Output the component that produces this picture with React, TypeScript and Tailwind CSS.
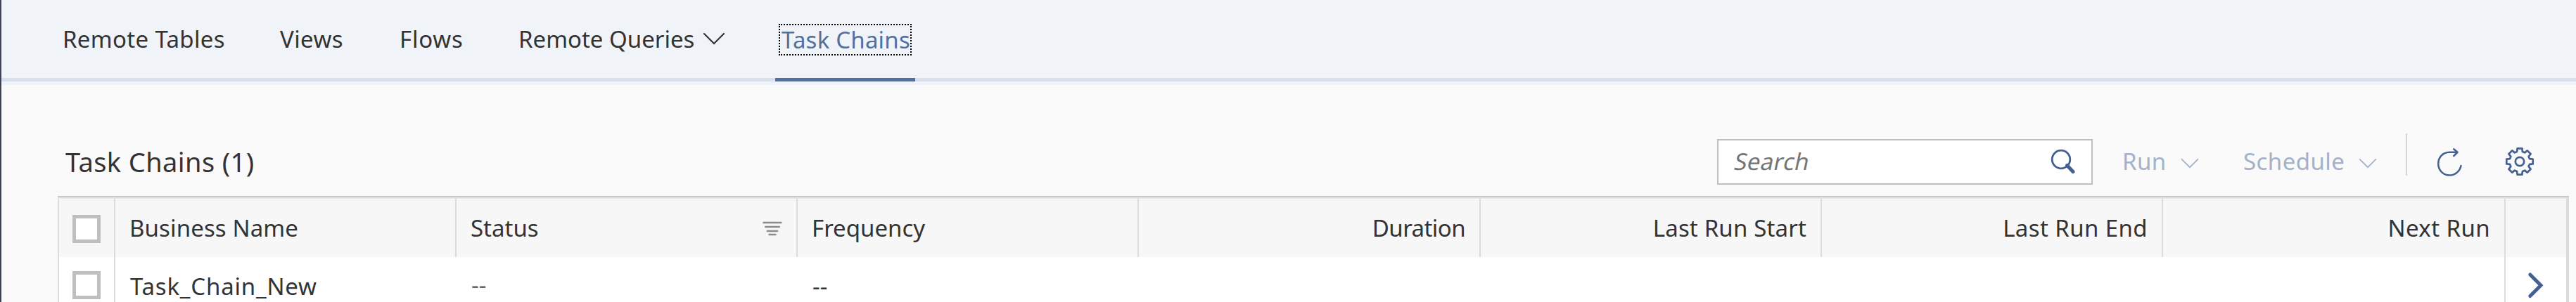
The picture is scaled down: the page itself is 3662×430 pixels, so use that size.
import React from "react";

const GEAR = (() => {
  const pts: string[] = [];
  for (let k = 0; k < 8; k++) {
    const a = (k * Math.PI) / 4;
    for (const [x, y] of [[-3.9, -14], [-3.4, -18.7], [3.4, -18.7], [3.9, -14]]) {
      const px = 22 + x * Math.cos(a) - y * Math.sin(a);
      const py = 22 + x * Math.sin(a) + y * Math.cos(a);
      pts.push(`${px.toFixed(2)} ${py.toFixed(2)}`);
    }
  }
  return `M${pts.join("L")}Z`;
})();

function Chevron({ className, strokeWidth }: { className: string; strokeWidth: number }) {
  return (
    <svg viewBox="0 0 32 18" fill="none" stroke="currentColor" strokeWidth={strokeWidth} strokeLinecap="round" className={className}>
      <path d="M2 2L16 16L30 2" />
    </svg>
  );
}

function Checkbox() {
  return <span className="size-10 shrink-0 border-[5px] border-[#bfbfbf] bg-white" />;
}

const cell = "flex items-center border-l-2 border-[#dcdcdc] px-5";

export default function App() {
  return (
    <div className="flex h-[430px] w-[3662px] flex-col overflow-hidden border-l-2 border-[#3b4354] bg-[#fafafa] font-['Noto_Sans','Liberation_Sans',sans-serif] text-[33px] leading-[44px] whitespace-nowrap text-[#333]">
      <nav className="flex h-[121px] shrink-0 border-b-[5px] border-[#f0f3fa] bg-[#f0f4f9]">
        <div className="flex h-[116px] w-full border-b-[5px] border-[#d8e0ee] pl-[87px]">
          <div className="w-[309px] pt-[34px] tracking-[0.34px]">Remote Tables</div>
          <div className="w-[170px] pt-[34px] tracking-[0.4px]">Views</div>
          <div className="w-[169px] pt-[34px] tracking-[0.8px]">Flows</div>
          <div className="flex w-[365px] pt-[34px]">
            <span className="w-[262px]">Remote Queries</span>
            <Chevron className="mt-[12px] h-[18px] w-8" strokeWidth={2.2} />
          </div>
          <div className="h-[116px] w-[199px] border-b-[5px] border-[#5170a0] pt-[34px] pl-[5px] text-[#5170a0]">
            <div className="h-[45px] w-[189px] border-2 border-dotted border-black pl-[2px] leading-[41px] tracking-[0.2px]">Task Chains</div>
          </div>
        </div>
      </nav>

      <main className="flex flex-1 flex-col pt-[69px] pl-20">
        <div className="flex h-[89px] shrink-0">
          <h1 className="w-[2348px] pt-[18px] pl-[11px] text-[38px] tracking-[0.4px]">Task Chains (1)</h1>
          <div className="mt-2 ml-[11px] flex h-[65px] w-[534px] justify-between border-2 border-[#bfbfbf] bg-white pl-[23px]">
            <span className="-skew-x-12 pt-[8px] tracking-[0.35px] text-[#757575]">Search</span>
            <svg viewBox="0 0 40 40" fill="none" stroke="#446090" className="mt-[9px] mr-[23px] size-10" strokeLinecap="round">
              <circle cx="20" cy="18" r="12.8" strokeWidth="2.8" />
              <path d="M28.5 26.5L37 35.5" strokeWidth="5" />
            </svg>
          </div>
          <div className="flex pt-[18px] pl-[42px] text-[#a3b1c9]">
            <span className="w-[83px] tracking-[0.4px]">Run</span>
            <Chevron className="mt-[17px] h-[15px] w-[26px]" strokeWidth={2.2} />
            <span className="ml-[63px] w-[164px] tracking-[0.45px]">Schedule</span>
            <Chevron className="mt-[17px] h-[15px] w-[26px]" strokeWidth={2.2} />
          </div>
          <div className="ml-[41px] h-[60px] w-[2px] bg-[#d3d5d8]" />
          <svg viewBox="0 0 44 44" fill="none" stroke="#446090" strokeWidth="2.5" strokeLinecap="round" strokeLinejoin="round" className="mt-[18px] ml-[38px] size-11">
            <path d="M33 8.8H22C12 9 6.2 16.5 6.2 25.3C6.2 34.5 13.5 41.6 22 41.6C30.5 41.6 37 35.5 38.5 28" />
            <path d="M28.3 4.2L33.5 8.8L28.3 14" />
          </svg>
          <svg viewBox="0 0 44 44" fill="none" stroke="#446090" strokeWidth="2.7" strokeLinejoin="round" className="mt-[18px] ml-14 size-11">
            <path d={GEAR} />
            <circle cx="22" cy="22" r="6.2" />
          </svg>
        </div>

        <div className="flex w-[3570px] flex-1 flex-col border-t-2 border-[#c9c9c9] bg-white">
          <div className="flex flex-1 flex-col border-t-2 border-r-4 border-t-[#e6e6e6] border-r-[#dcdcdc]">
            <div className="grid h-[83px] shrink-0 grid-cols-[80px_485px_485px_485px_486px_485px_485px_487px_88px] bg-[#f7f7f7]">
              <div className="flex items-center border-l-2 border-[#dcdcdc] pt-[3px] pl-[19px]"><Checkbox /></div>
              <div className={`${cell} tracking-[0.12px]`}>Business Name</div>
              <div className={`${cell} justify-between`}>
                <span>Status</span>
                <svg viewBox="0 0 28 22" fill="none" stroke="#8c8c8c" strokeWidth="2.3" className="h-[22px] w-7">
                  <path d="M0.5 3H27.5M3.2 9H24.8M5.8 15H22.2M8.5 20H19.5" />
                </svg>
              </div>
              <div className={cell}>Frequency</div>
              <div className={`${cell} justify-end tracking-[-0.57px]`}>Duration</div>
              <div className={`${cell} justify-end tracking-[0.15px]`}>Last Run Start</div>
              <div className={`${cell} justify-end tracking-[0.4px]`}>Last Run End</div>
              <div className={`${cell} justify-end tracking-[0.4px]`}>Next Run</div>
              <div className="border-l-2 border-[#dcdcdc]" />
            </div>
            <div className="grid flex-1 grid-cols-[80px_485px_485px_485px_486px_485px_485px_487px_88px] overflow-hidden bg-white">
              <div className="flex items-start border-l-2 border-[#dcdcdc] pt-5 pl-[19px]"><Checkbox /></div>
              <div className="border-l-2 border-[#dcdcdc] pt-[20px] pl-[21px] tracking-[0.8px]">Task_Chain_New</div>
              <div className="pt-[18px] pl-[23px] text-[#5b6770]">--</div>
              <div className="pt-[20px] pl-[23px]">--</div>
              <div />
              <div />
              <div />
              <div />
              <div className="border-l-2 border-[#dcdcdc] pt-[18px] pl-[28px]">
                <svg viewBox="0 0 32 44" fill="none" stroke="#446090" strokeWidth="5" strokeLinecap="round" className="h-11 w-8">
                  <path d="M6.8 7L22 22.3L6.8 37.5" />
                </svg>
              </div>
            </div>
          </div>
        </div>
      </main>
    </div>
  );
}
